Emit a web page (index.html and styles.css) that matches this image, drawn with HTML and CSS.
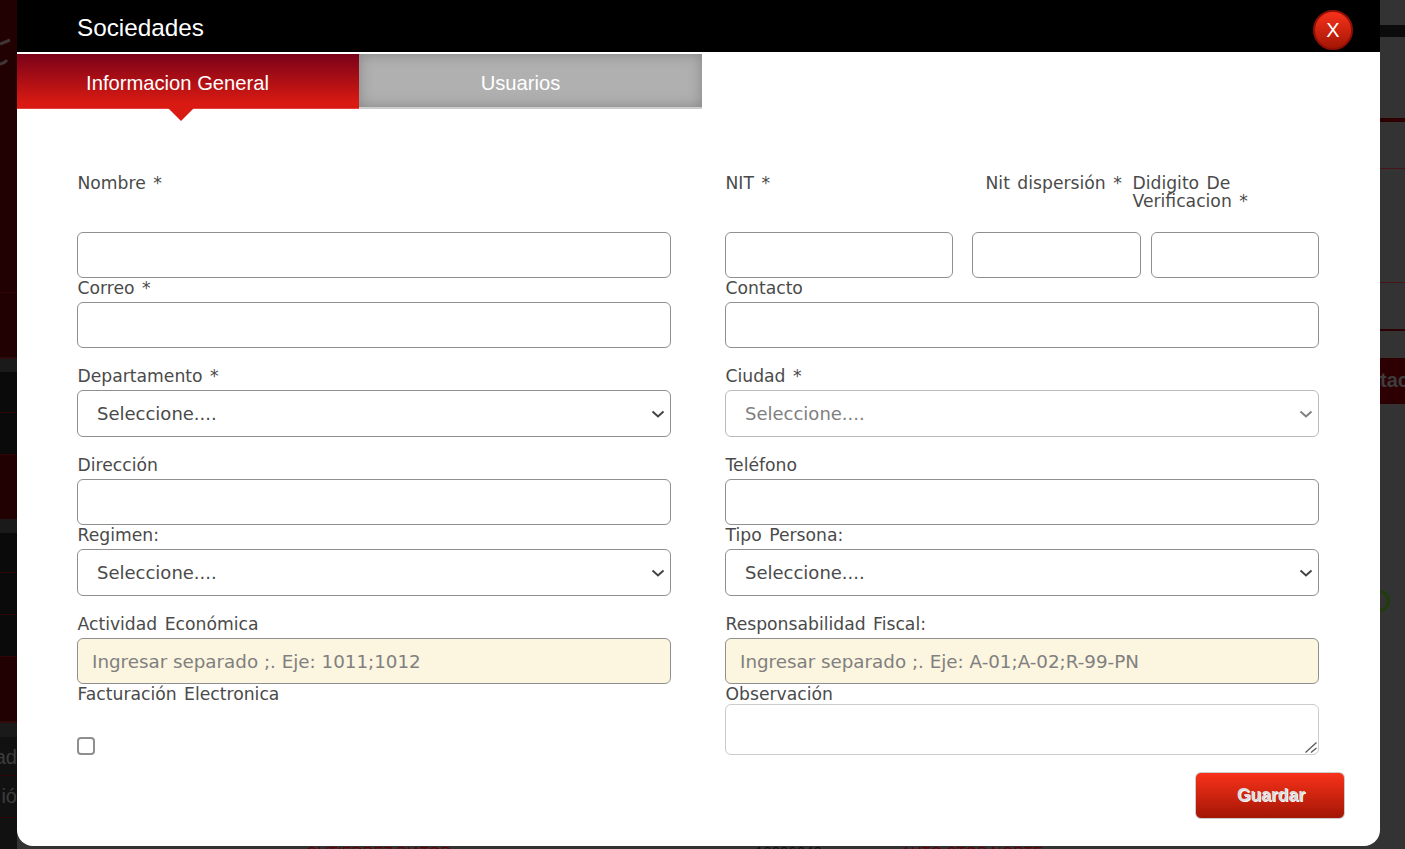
FILE: index.html
```html
<!DOCTYPE html>
<html lang="en">
<head>
    <meta charset="UTF-8">
    <title>Sociedades</title>
    <link rel="stylesheet" href="styles.css">
</head>
<body>
<div class="page-left">
    <svg class="ghost" width="17" height="40" viewBox="0 0 17 40"><path d="M0 11 L10 7 M0 31 Q5 30 7 27" fill="none" stroke="#3f3535" stroke-width="3"/></svg>
    <div class="band red line" style="height:293px"></div>
    <div class="band red thick" style="height:66px"></div>
    <div class="band grey" style="height:13px"></div>
    <div class="band black line" style="height:41px"></div>
    <div class="band black line" style="height:42px"></div>
    <div class="band red" style="height:64px"></div>
    <div class="band grey" style="height:14px"></div>
    <div class="band black line" style="height:40px"></div>
    <div class="band black line" style="height:42px"></div>
    <div class="band black line" style="height:42px"></div>
    <div class="band red thick" style="height:66px"></div>
    <div class="band grey" style="height:14px"></div>
    <div class="band dark line" style="height:39px"><span class="bg-text">ad</span></div>
    <div class="band dark line" style="height:42px"><span class="bg-text">ió</span></div>
    <div class="band dark" style="height:31px"></div>
</div>
<div class="under-row">
    <span class="u-name">GUTIERREZ PIATOR</span>
    <span class="u-id">10006240</span>
    <span class="u-place">AUTO STOP NORTE</span>
</div>
<div class="page-right">
    <div class="ring"></div>
    <div class="side s1" style="height:25px"></div>
    <div class="side s2" style="height:12px"></div>
    <div class="side s1 redline" style="height:85px"></div>
    <div class="side s1 thinline" style="height:47px"></div>
    <div class="side s1 thinline" style="height:114px"></div>
    <div class="side s1 redline2" style="height:48px"></div>
    <div class="side s1" style="height:27px"></div>
    <div class="side s3" style="height:46px"><span class="bg-text">tac</span></div>
    <div class="side s1" style="height:445px"></div>
</div>

<div id="modal">
    <div class="modal-head">
        <h2>Sociedades</h2>
        <button class="btn-close">X</button>
    </div>
    <ul class="tabs">
        <li class="selected">Informacion General</li>
        <li>Usuarios</li>
    </ul>
    <form class="form">
        <div class="col">
            <div class="top-labels"><label>Nombre *</label></div>
            <input class="ctl" type="text">
            <label>Correo *</label>
            <input class="ctl" type="text">
            <label class="spaced">Departamento *</label>
            <select class="ctl"><option>Seleccione....</option></select>
            <label class="spaced">Dirección</label>
            <input class="ctl" type="text">
            <label>Regimen:</label>
            <select class="ctl"><option>Seleccione....</option></select>
            <label class="spaced">Actividad Económica</label>
            <input class="ctl note" type="text" placeholder="Ingresar separado ;. Eje: 1011;1012">
            <label class="bare">Facturación Electronica</label>
            <input class="check" type="checkbox">
        </div>
        <div class="col">
            <div class="top-labels">
                <label class="l-nit">NIT *</label>
                <label class="l-disp">Nit dispersión *</label>
                <label class="l-dig">Didigito De Verificacion *</label>
            </div>
            <div class="nit-row">
                <input class="ctl nit-a" type="text">
                <input class="ctl nit-b" type="text">
                <input class="ctl nit-c" type="text">
            </div>
            <label>Contacto</label>
            <input class="ctl" type="text">
            <label class="spaced">Ciudad *</label>
            <select class="ctl off" disabled><option>Seleccione....</option></select>
            <label class="spaced">Teléfono</label>
            <input class="ctl" type="text">
            <label>Tipo Persona:</label>
            <select class="ctl"><option>Seleccione....</option></select>
            <label class="spaced">Responsabilidad Fiscal:</label>
            <input class="ctl note" type="text" placeholder="Ingresar separado ;. Eje: A-01;A-02;R-99-PN">
            <label class="bare">Observación</label>
            <div class="area-wrap">
                <textarea class="area"></textarea>
                <svg class="grip" width="12" height="11" viewBox="0 0 12 11"><path d="M11.5 .5 L.5 10.5 M11.5 6 L6 10.5" fill="none" stroke="#555" stroke-width="1.2"/></svg>
            </div>
        </div>
    </form>
    <div class="actions">
        <button class="btn-save">Guardar</button>
    </div>
</div>
</body>
</html>
```

FILE: styles.css
```css
*{
    margin:0;
    padding:0;
    box-sizing:border-box;
}
html,body{
    height:849px;
    overflow:hidden;
}
body{
    display:flex;
    justify-content:space-between;
    background:#333;
    font-family:"DejaVu Sans",sans-serif;
}
ul{
    list-style:none;
}
.page-left{
    position:relative;
    width:17px;
}
.ghost{
    position:absolute;
    left:0;
    top:33px;
}
.band.red{
    background:#220103;
}
.band.grey{
    background:#1a1a1a;
}
.band.black{
    background:#0a0a0a;
}
.band.dark{
    background:#111;
}
.band.line{
    border-bottom:1px solid #2e0607;
}
.band.thick{
    border-bottom:2px solid #2e0a0a;
}
.bg-text{
    display:block;
    color:#3d3d3d;
    font:20px "Liberation Sans",sans-serif;
    white-space:nowrap;
}
.page-left .bg-text{
    width:17px;
    padding-top:9px;
    overflow:hidden;
    direction:rtl;
}
.page-right{
    position:relative;
    width:25px;
}
.ring{
    position:absolute;
    left:-12px;
    top:590px;
    width:22px;
    height:22px;
    border:3px solid #1f3d0a;
    border-radius:50%;
}
.side.s2{
    background:#0b0b0b;
}
.side.s3{
    padding-top:11px;
    overflow:hidden;
    background:#2c0003;
}
.side.s3 .bg-text{
    font-weight:bold;
}
.side.redline{
    border-bottom:4px solid #2c0003;
}
.side.redline2{
    border-bottom:2px solid #2c0003;
}
.side.thinline{
    border-bottom:1px solid #4a1417;
}
.under-row{
    position:absolute;
    left:0;
    bottom:-9px;
    display:flex;
    color:#5a0508;
    font:15px/12px "Liberation Sans",sans-serif;
    white-space:nowrap;
}
.u-name{
    margin-left:306px;
    width:449px;
}
.u-id{
    width:146px;
    color:#111;
}

#modal{
    position:absolute;
    left:17px;
    top:0;
    width:1363px;
    height:846px;
    background:#fff;
    border-radius:0 0 16px 16px;
}
.modal-head{
    height:54px;
    padding:0 27px 0 60px;
    display:flex;
    justify-content:space-between;
    background:#000;
    border-bottom:2px solid #fff;
    color:#fff;
}
.modal-head h2{
    font:normal 24.3px/56px "Liberation Sans",sans-serif;
}
.btn-close{
    width:40px;
    height:40px;
    margin-top:10px;
    border:2px solid #8f0f06;
    border-radius:50%;
    background:linear-gradient(#f8321a,#a31605);
    color:#fff;
    font:20px "Liberation Sans",sans-serif;
}
.tabs{
    display:flex;
    height:55px;
}
.tabs li{
    width:343px;
    height:55px;
    padding:2px 20px 0 0;
    border-bottom:2px solid #ccc;
    background:#b0b0b0;
    box-shadow:inset 0 0 14px #858585;
    color:#fff;
    font:20.2px/54px "Liberation Sans",sans-serif;
    text-align:center;
}
.tabs li.selected{
    position:relative;
    width:342px;
    padding-right:21px;
    border-bottom:1px solid #e6413c;
    background:linear-gradient(#7a0219,#d81a12 90%);
    box-shadow:none;
}
.tabs li.selected:after{
    content:"";
    position:absolute;
    left:151px;
    top:54px;
    border:13px solid transparent;
    border-top-color:#d81a12;
    border-bottom:0;
}
.form{
    display:flex;
    gap:54px;
    padding:64px 0 0 60px;
}
.col{
    width:594px;
    display:flex;
    flex-direction:column;
}
label{
    display:block;
    height:18px;
    margin-bottom:6px;
    padding:1px 0 0 .5px;
    color:#4a4a4a;
    font-size:17.2px;
    line-height:18px;
    word-spacing:2px;
}
label.spaced{
    margin-top:18px;
}
label.bare{
    margin-bottom:2px;
}
.top-labels{
    display:flex;
    height:59px;
}
.l-nit{
    width:260px;
}
.l-disp{
    width:147px;
}
.l-dig{
    width:187px;
    height:36px;
}
.ctl{
    display:block;
    width:100%;
    height:46px;
    border:1px solid #8f8f8f;
    border-radius:6px;
    background:#fff;
    color:#4a4a4a;
    font-family:"DejaVu Sans",sans-serif;
    font-size:18px;
}
select.ctl{
    height:47px;
    padding:0 19px;
    appearance:none;
    background:#fff url("data:image/svg+xml,%3Csvg xmlns='http://www.w3.org/2000/svg' width='14' height='8'%3E%3Cpath d='M1.5 1.5 L7 6.5 L12.5 1.5' fill='none' stroke='%23444' stroke-width='2'/%3E%3C/svg%3E") no-repeat right 5px center;
}
select.off{
    border-color:#bbb;
    color:#808080;
    opacity:1;
    background-image:url("data:image/svg+xml,%3Csvg xmlns='http://www.w3.org/2000/svg' width='14' height='8'%3E%3Cpath d='M1.5 1.5 L7 6.5 L12.5 1.5' fill='none' stroke='%23808080' stroke-width='2'/%3E%3C/svg%3E");
}
.note{
    padding:0 14px;
    background:#fcf5df;
    font-size:18.3px;
}
.note::placeholder{
    color:#808080;
}
.nit-row{
    display:flex;
}
.nit-row .ctl{
    width:auto;
    min-width:0;
}
.nit-a{
    flex:0 0 228px;
    margin-right:19px;
}
.nit-b{
    flex:0 0 169px;
    margin-right:10px;
}
.nit-c{
    flex:0 0 168px;
}
.check{
    width:18px;
    height:18px;
    margin-top:33px;
    appearance:none;
    border:2px solid #8f8f8f;
    border-radius:4px;
    background:#fff;
}
.area-wrap{
    position:relative;
    height:51px;
}
.area{
    display:block;
    width:100%;
    height:51px;
    border:1px solid #ccc;
    border-radius:6px;
    resize:none;
}
.grip{
    position:absolute;
    right:2px;
    bottom:2px;
}
.actions{
    display:flex;
    justify-content:flex-end;
    padding:17px 35px 0 0;
}
.btn-save{
    width:150px;
    height:47px;
    padding:0 0 1px 2px;
    border:1px solid #ccc;
    border-radius:6px;
    background:linear-gradient(#f8321a,#a31605);
    color:#ddd;
    font:bold 17.5px "Liberation Sans",sans-serif;
    text-shadow:1px 1px 0 #fff;
}
```
